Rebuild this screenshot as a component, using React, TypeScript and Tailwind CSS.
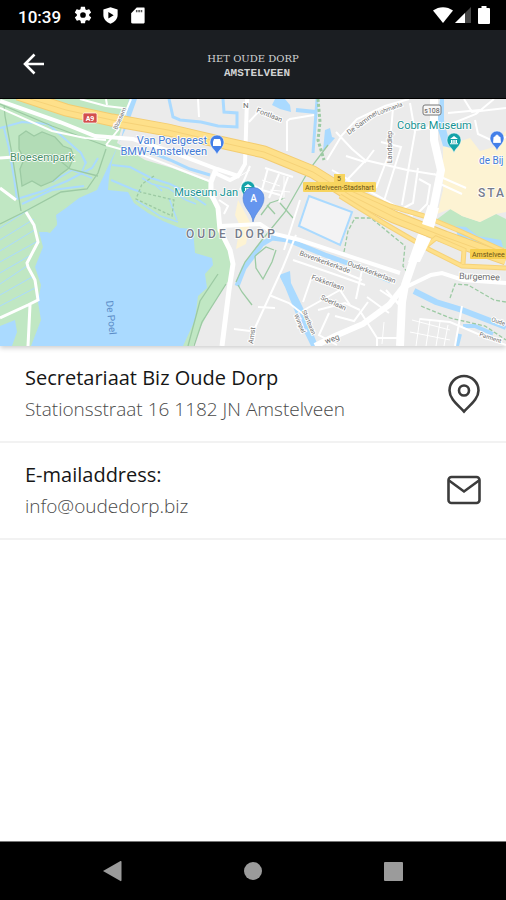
import React from "react";

const sans = "font-['Roboto','Liberation_Sans',sans-serif]";

function StatusBar() {
  return (
    <div className={`flex h-[30px] items-center bg-black pl-[18px] pr-4 text-white ${sans}`}>
      <span className="pt-1 text-[17px] leading-[26px] font-medium">10:39</span>
      <svg viewBox="0 0 24 24" className="ml-3 size-5" fill="#fff">
        <path d="M19.4 13c0-.3.1-.6.1-1s0-.7-.1-1l2.100-1.600c.2-.2.2-.4.100-.6l-2-3.500c-.1-.2-.4-.3-.6-.2l-2.500 1c-.5-.4-1.100-.7-1.700-1l-.4-2.600c0-.3-.2-.5-.5-.5h-4c-.3 0-.4.200-.5.400l-.4 2.700c-.6.200-1.100.6-1.600.9l-2.500-1c-.3 0-.5 0-.6.200l-2 3.500c-.1.300-.1.500.1.700L4.600 11v2l-2.100 1.600c-.2.200-.2.400-.1.600l2 3.500c.1.200.3.300.6.200l2.500-1c.5.400 1 .7 1.600 1l.4 2.600c.1.300.2.500.5.500h4c.3 0 .4-.2.500-.4l.4-2.700c.6-.2 1.200-.6 1.700-1l2.500 1c.2.100.5 0 .6-.2l2-3.500c.1-.2.100-.5-.1-.6zM12 15.400a3.400 3.400 0 1 1 0-6.800 3.400 3.400 0 0 1 0 6.800z" />
      </svg>
      <svg viewBox="0 0 24 24" className="ml-2 size-[19px]" fill="#fff">
        <path fillRule="evenodd" d="M12 1.500 3 4.500v7c0 5 3.600 9 9 11 5.400-2 9-6 9-11v-7zM9.300 7.500l6.700 4.200-6.700 4.200z" />
      </svg>
      <svg viewBox="0 0 24 24" className="ml-2 size-[19px]" fill="#fff">
        <path d="M20 2h-9L4 9v11.500c0 1 .8 1.500 1.700 1.500H19c1 0 2-.6 2-1.600V3.500C21 2.600 20.800 2 20 2z" />
        <path d="M10 5h2v3h-2zm3 0h2v3h-2zm3 0h2v3h-2z" fill="#555" />
      </svg>
      <svg viewBox="0 0 20 16" className="ml-auto h-4 w-5" fill="#fff">
        <path d="M0 3.500C6-1 14-1 20 3.500L10 16z" />
      </svg>
      <svg viewBox="0 0 16 16" className="ml-[2px] size-4">
        <path d="M16 0v16H0z" fill="#444" />
        <path d="M10 6v10H0z" fill="#fff" />
      </svg>
      <svg viewBox="0 0 12 18" className="ml-[7px] h-[18px] w-3" fill="#fff">
        <path d="M1 2h2.500V0h5v2H11q1 0 1 1v14q0 1-1 1H1q-1 0-1-1V3q0-1 1-1z" />
      </svg>
    </div>
  );
}

function Header() {
  return (
    <header className="grid h-[69px] grid-cols-[1fr_auto_1fr] items-center border-b border-black bg-[#1b1e22]">
      <button type="button" aria-label="Terug" className="ml-[22px] flex size-6 items-center justify-center">
        <svg viewBox="0 0 24 24" className="size-6" fill="none" stroke="#fff" strokeWidth="2.600">
          <path d="M22 12H3M12.500 2.500 3 12l9.500 9.500" />
        </svg>
      </button>
      <h1 className="flex flex-col items-center pt-1 text-[#d2d3d4]">
        <span className="font-['DejaVu_Serif',serif] text-[10px] leading-[15px]">HET OUDE DORP</span>
        <span className="pl-2 font-['Liberation_Mono',monospace] text-[11px] leading-[15px] font-bold">AMSTELVEEN</span>
      </h1>
    </header>
  );
}

function Pin({ x, y, color, children }: { x: number; y: number; color: string; children: React.ReactNode }) {
  return (
    <g transform={`translate(${x} ${y})`}>
      <path d="M0 12C-1 7-7 5-7-1A7 7 0 0 1 7-1C7 5 1 7 0 12z" fill={color} stroke="#fff" strokeWidth=".5" />
      {children}
    </g>
  );
}

function Museum() {
  return <path d="M-4-2 0-5 4-2zM-3-1h1.500v3H-3zM-.7-1H.7v3H-.7zM1.500-1H3v3H1.500zM-4 2.300h8v1h-8z" fill="#fff" />;
}

function CityMap() {
  return (
    <svg
      viewBox="0 99 506 247"
      preserveAspectRatio="xMidYMid slice"
      role="img"
      aria-label="Kaart van Oude Dorp"
      className={`block h-[247px] w-full bg-[#ebebeb] ${sans}`}
    >
      {/* parks */}
      <g fill="#c0e7c3">
        <path d="M0 99H131L117 143 145 160 172 168 209 182 208 196 217 207 220 230 229 250 231 262 229 280 213 304 200 328 193 346H0z" />
        <path d="M436 220 452 208 462 216 480 222 496 214 506 219V249L478 240 460 231z" />
      </g>
      <path d="M19 136 26 131 34 136 42 132 55 137 63 146 71 149 74 157 69 168 61 174 53 181 41 186 32 181 22 186 20 169 24 159 19 149z" fill="#b2dcb6" />
      <path d="M443 147 470 138 480 151 494 147 506 130V212L496 214 480 222 462 216 450 209 437 214 443 190z" fill="#fdf3d3" />
      <path d="M238 200 250 222 246 244 236 249 240 226 235 215z" fill="#fdf3d3" />
      <path d="M309 196 352 212 340 245 299 226z" fill="#f3f3f4" />

      {/* lake, canals and ditches */}
      <path
        d="M129 99H137L128 124 118 145 112 161 109 177 108 190 128 192 134 203 148 213 163 221 180 228 193 229 195 253 212 258 213 265 205 274 207 288 198 296 195 320 183 346H31L41 320 38 302 41 285 35 267 43 247 39 232 48 232 57 224 56 215 66 208 79 198 97 190 105 173 112 158 121 139 126 118z"
        fill="#aadaff"
      />
      <path d="M36 218 44 231 50 233 57 225 55 212 46 210z" fill="#c0e7c3" />
      <g fill="none" stroke="#aadaff" strokeWidth="1.500">
        <path d="M0 128 22 122 48 124 64 138 81 153 86 164" strokeWidth="2" />
        <path d="M4 128 9 148 14 178 17 199M17 199 43 191 67 181 92 168 98 158M22 204 52 190 84 186" strokeWidth="2" />
        <path d="M80 151 86 162 82 171 90 174M52 182 72 170 92 178" />
        <path d="M112 165 130 167 151 178 170 184 190 194 206 205M111 180 132 189 141 192" strokeWidth="2" />
        <path d="M142 178 152 184 168 188 186 200 196 204M136 200 160 216 178 222M154 184 162 191M169 198 177 220" />
        <path d="M0 228 31 208M0 240 34 219M0 251 36 229M0 262 38 241M0 273 31 255M0 284 27 266M0 295 32 277M0 306 35 288" strokeWidth="1" />
      </g>
      <g fill="#aadaff">
        <path d="M0 326 15 320 17 332 12 346H0zM440 99h4v22l7 27-8-2-6-20zM325 130l5-2 2 9 3 1-7 8-5 5z" />
        <path d="M279 275 290 271 291 283 304 310 318 346H311L298 319 285 287z" />
        <path d="M455 226 466 227 478 236 501 240 503 247 484 249 470 239 458 237z" />
        <path d="M275 99h10l5 6 1 7-11-3-8-4z" />
      </g>
      <g fill="none" stroke="#aadaff">
        <path d="M237 286 244 268 262 244 272 238 288 240 325 255 350 264 391 281" strokeWidth="5" />
        <path d="M414 291 436 302 462 310 506 327" strokeWidth="6" />
        <path d="M463 326h12l18 8M457 346l3-12" strokeWidth="4" />
        <path d="M169 99 173 117 180 120 201 122 218 126 237 127V113L224 112 223 99M317 99 315 126 313 153" strokeWidth="3" />
        <path d="M148 151 170 160 190 169 210 175" strokeWidth="3" />
        <path d="M309 196 352 212 340 245 299 226z" strokeWidth="2" />
        <path d="M296 110 316 112" strokeWidth="4" />
      </g>

      {/* footpaths */}
      <g fill="none" stroke="#9ccaa3" strokeWidth="1.300">
        <path d="M19 136 26 131 34 136 42 132 55 137 63 146 71 149 74 157 69 168 61 174 53 181 41 186 32 181 22 186 20 169 24 159 19 149z" />
        <path d="M4 105 5 116 12 154 21 211M0 224 22 213 61 192 87 189 98 173 106 149M52 154 70 169 98 176M0 104 52 126 106 146" />
        <path d="M154 176 142 184 136 199 172 216 174 200 140 192" strokeDasharray="3 2" />
        <path d="M218 274 200 301 188 346M226 284 202 322 194 346" />
        <path d="M238 285 242 292 252 305M255 256 256 268 263 279 272 262 276 250M255 256 266 247 274 250" />
        <path d="M236 282 245 262 262 240 285 212 309 170 328 145" />
        <path d="M261 215 270 203 285 198M267 205 275 214M280 203 293 218" />
        <path d="M318 99 320 122 318 140 324 160" strokeDasharray="3 2" strokeWidth="3" />
        <path d="M344 252 348 231 355 218 371 218 405 246 403 266 407 272" strokeDasharray="4 2" />
        <path d="M450 298 455 284 468 285 494 300 506 302M421 306 450 318 485 326 506 340" strokeDasharray="4 2" />
      </g>

      {/* residential streets */}
      <g fill="none" stroke="#fff" strokeWidth="2">
        <path d="M287 121 290 119 314 115M287 121V151M249 122 260 110M265 168 293 177M268 168 262 190M279 174 269 198M288 177 279 202M249 183 262 190 280 195M198 99 199 117M170 128 190 130M250 166 240 190M219 200 228 206 224 214M300 200 284 250" />
        <path d="M327 160 342 135 357 119 385 106 409 99M336 132 352 149 365 160 407 170 438 175M365 161 347 180 378 196 413 216M374 150 365 162 346 156M393 108 389 154 376 188M410 103 415 132 402 205M434 116 428 128 415 130M418 168 413 203 398 211M381 142 401 147 384 201M419 179 430 185 427 204 418 213M332 170 356 184M434 174 466 188M436 182 462 194M446 126 476 114 494 99M464 99 472 112 506 108M448 113 480 110M475 120 478 134 495 142 506 137" />
        <path d="M296 235 283 267 254 330M269 295 289 303 308 318M293 260 328 272 365 285M312 276 303 302M318 310 345 303 360 310M325 261 340 271 362 280M362 270 356 299M329 313 319 335 337 345M350 305 340 290 304 310M368 302 354 321 335 316M380 290 398 302M386 290 400 306M367 297 389 313M360 311 377 338 377 346M377 338 400 338M258 307 275 308M234 329 250 331" />
        <path d="M462 306 455 346M420 319 450 322 485 337 506 345" />
      </g>
      <g fill="none" stroke="#fff" strokeWidth="1">
        <path d="M412 320 450 330M410 332 450 340M420 318 416 346M430 320 426 346M440 322 436 346M448 325 444 346M384 322 382 344M250 170 240 176M262 180 280 186M284 176 284 200M270 190 290 192" />
      </g>

      {/* main streets */}
      <g fill="none" stroke="#fff" strokeWidth="4">
        <path d="M0 101 60 122 95 136 133 139 172 152 217 169 238 176 245 164 247 99" />
        <path d="M106 145 145 156 176 168 209 181M106 145 118 130 131 99M80 99 106 106 123 108M106 99 107 105" strokeWidth="2" />
        <path d="M0 108 52 131 85 138 106 140" strokeWidth="2" />
        <path d="M26 212 34 225 38 242 27 263 28 267 35 280 38 300 28 305 0 318M30 305 28 346M0 188 16 200M0 158 14 157" strokeWidth="3" />
        <path d="M216 169 211 182 211 194 218 208 220 230 230 250 233 264 229 290 222 346" strokeWidth="5" />
        <path d="M238 176 230 180 213 172M220 226 260 224 275 234 300 240 400 273" strokeWidth="4" />
      </g>
      <g fill="none" stroke="#fff">
        <path d="M434 99 434 140 441 170 434 205 424 230 405 285 402 302 400 346" strokeWidth="8" />
        <path d="M404 288 431 275 442 273 463 280 506 283" strokeWidth="4" />
        <path d="M404 286 389 305 363 324 335 336 315 346" strokeWidth="6" />
      </g>

      {/* motorway */}
      <g fill="none" strokeLinecap="butt">
        <path d="M18 94 66 110 112 120 168 130 215 141 264 152 313 172 350 195 394 217 445 237 506 259" stroke="#f3cc70" strokeWidth="13" />
        <path d="M18 94 66 110 112 120 168 130 215 141 264 152 313 172 350 195 394 217 445 237 506 259" stroke="#fee08a" strokeWidth="11" />
        <path d="M340 184 390 206 424 216M340 196 382 222 430 250 462 266 506 268M424 216 460 231 506 252M426 246 436 238 464 250 463 264" stroke="#f6d278" strokeWidth="5" />
        <path d="M340 184 390 206 424 216M340 196 382 222 430 250 462 266 506 268M424 216 460 231 506 252M426 246 436 238 464 250 463 264" stroke="#fee08a" strokeWidth="3" />
        <path d="M30 99 66 110 112 120 168 130 215 141 264 152 313 172 350 195 394 217 445 237 506 259" stroke="#f6d278" strokeWidth="1" />
      </g>
      <path d="M418 234 431 239 420 262 408 262zM428 205 439 208 434 228 422 224z" fill="#fff" />

      {/* road shields */}
      <rect x="83" y="113" width="14" height="10" rx="1.500" fill="#d34f4d" stroke="#fff" strokeWidth=".7" />
      <text x="90" y="121" textAnchor="middle" fontSize="7" fontWeight="700" fill="#fff">A9</text>
      <rect x="423" y="105" width="18" height="10" rx="2" fill="#f7f7f7" stroke="#777" />
      <text x="432" y="113" textAnchor="middle" fontSize="7" fill="#555">s108</text>
      <g fontSize="7" fill="#6b5418">
        <rect x="334" y="174" width="11" height="9" fill="#f7d45e" />
        <text x="339" y="181" textAnchor="middle">5</text>
        <rect x="303" y="182" width="73" height="10" rx="1" fill="#f7d45e" />
        <text x="305" y="190">Amstelveen-Stadshart</text>
        <rect x="470" y="249" width="40" height="10" rx="1" fill="#f7cf4f" />
        <text x="472" y="257">Amstelvee</text>
      </g>

      {/* street names */}
      <g fontSize="7" fill="#707070" stroke="#fff" strokeWidth="2" paintOrder="stroke">
        <text transform="translate(117 130) rotate(-66)" fontSize="6">Bloesem</text>
        <text transform="translate(256 112) rotate(22)">Fontlaan</text>
        <text transform="translate(243 108)" fontSize="8">N</text>
        <text transform="translate(349 135) rotate(-36)">De Sammer</text>
        <text transform="translate(378 115) rotate(-20)" fontSize="6">Lohmanla</text>
        <text transform="translate(392 163) rotate(-90)">Landsdiep</text>
        <text transform="translate(299 255) rotate(20)">Bovenkerkerkade</text>
        <text transform="translate(347 265) rotate(21)">Ouderkerkerlaan</text>
        <text transform="translate(311 279) rotate(20)">Fokkerlaan</text>
        <text transform="translate(320 299) rotate(25)">Soerlaan</text>
        <text transform="translate(294 315) rotate(67)" fontSize="6">Wimpel</text>
        <text transform="translate(302 311) rotate(67)" fontSize="6">Startbaan</text>
        <text transform="translate(253 344) rotate(-82)">Amst</text>
        <text transform="translate(326 344) rotate(-20)" fontSize="8">weg</text>
        <text transform="translate(459 279) rotate(2)" fontSize="9">Burgemee</text>
        <text transform="translate(491 321) rotate(20)" fontSize="6">Oude</text>
        <text transform="translate(479 336) rotate(18)" fontSize="6">Parment</text>
      </g>

      {/* places */}
      <g stroke="#fff" strokeWidth="1.500" paintOrder="stroke" fontSize="11">
        <text x="10" y="161" fill="#4a9169">Bloesempark</text>
        <g fill="#437bd5">
          <text x="207" y="144" textAnchor="end">Van Poelgeest</text>
          <text x="207" y="155" textAnchor="end">BMW-Amstelveen</text>
          <text x="479" y="164" fontSize="10">de Bij</text>
        </g>
        <g fill="#159293">
          <text x="238" y="196" textAnchor="end">Museum Jan</text>
          <text x="397" y="129">Cobra Museum</text>
        </g>
        <g fill="#767c8b" fontSize="12" fontWeight="500" letterSpacing="3">
          <text x="186" y="238">OUDE DORP</text>
          <text x="478" y="197" letterSpacing="2">STA</text>
        </g>
      </g>
      <text transform="translate(106 301) rotate(84)" fontSize="10" fill="#5b8cc7">De Poel</text>

      <Pin x={217} y={143} color="#437fe8"><path d="M-4-1l1-3h6l1 3v4h-8z" fill="#fff" /></Pin>
      <Pin x={248} y={189} color="#14a3a8"><Museum /></Pin>
      <Pin x={454} y={141} color="#14a3a8"><Museum /></Pin>
      <Pin x={497} y={139} color="#437fe8"><path d="M-3.500 3.500 -3-2h6l.5 5.500zM-1.500-2q0-2 1.500-2t1.500 2" fill="#fff" stroke="#fff" strokeWidth=".8" /></Pin>
      <path d="M253 222C252 212 243 208 243 198A10.500 10.500 0 0 1 264 198C264 208 255 212 253 222z" fill="#6595ee" stroke="#4c7fd9" strokeWidth=".6" />
      <text x="253.500" y="202" textAnchor="middle" fontSize="10" fontWeight="500" fill="#fff">A</text>
    </svg>
  );
}

function ContactRow({ title, detail, href, children }: { title: string; detail: string; href: string; children: React.ReactNode }) {
  return (
    <li className="border-b-2 border-[#f2f2f2]">
      <a href={href} className="flex items-center justify-between gap-4 py-4 pr-6 pl-[25px]">
        <span className="flex flex-col font-['Open_Sans','Noto_Sans',sans-serif]">
          <span className="text-[20px] leading-8 font-medium text-[#161616]">{title}</span>
          <span className="text-[19px] leading-[31px] font-light text-[#4a4a4a]">{detail}</span>
        </span>
        {children}
      </a>
    </li>
  );
}

function NavBar() {
  return (
    <nav className="mt-auto flex h-[59px] items-center justify-center gap-[116px] border-t border-[#777] bg-black">
      <button type="button" aria-label="Vorige" className="flex size-6 items-center justify-center">
        <svg viewBox="0 0 24 24" className="size-6" fill="#9b9b9b"><path d="M2 12 19.500 2q1-.5 1 1v18q0 1.500-1 1z" /></svg>
      </button>
      <button type="button" aria-label="Startscherm" className="flex size-6 items-center justify-center">
        <span className="size-[18px] rounded-full bg-[#9b9b9b]" />
      </button>
      <button type="button" aria-label="Overzicht" className="flex size-6 items-center justify-center">
        <span className="size-[19px] rounded-[1px] bg-[#9b9b9b]" />
      </button>
    </nav>
  );
}

export default function App() {
  return (
    <div className="flex min-h-screen flex-col bg-white">
      <StatusBar />
      <Header />
      <main>
        <div className="relative shadow-[0_2px_5px_rgba(0,0,0,0.2)]">
          <CityMap />
        </div>
        <ul>
          <ContactRow title="Secretariaat Biz Oude Dorp" detail="Stationsstraat 16 1182 JN Amstelveen" href="#kaart">
            <svg viewBox="0 0 36 40" className="h-10 w-9 shrink-0" fill="none" stroke="#3c3c3c" strokeWidth="2.600">
              <path d="M18 37.500C12 31 3.500 25 3.500 16.500a14.500 14.500 0 0 1 29 0C32.500 25 24 31 18 37.500z" />
              <circle cx="18" cy="16.500" r="5" />
            </svg>
          </ContactRow>
          <ContactRow title="E-mailaddress:" detail="info@oudedorp.biz" href="mailto:info@oudedorp.biz">
            <svg viewBox="0 0 36 40" className="h-10 w-9 shrink-0" fill="none" stroke="#3c3c3c" strokeWidth="2.600">
              <rect x="2.500" y="6" width="31" height="26" rx="3" />
              <path d="M3 9.500 18 20.500 33 9.500" />
            </svg>
          </ContactRow>
        </ul>
      </main>
      <NavBar />
    </div>
  );
}
